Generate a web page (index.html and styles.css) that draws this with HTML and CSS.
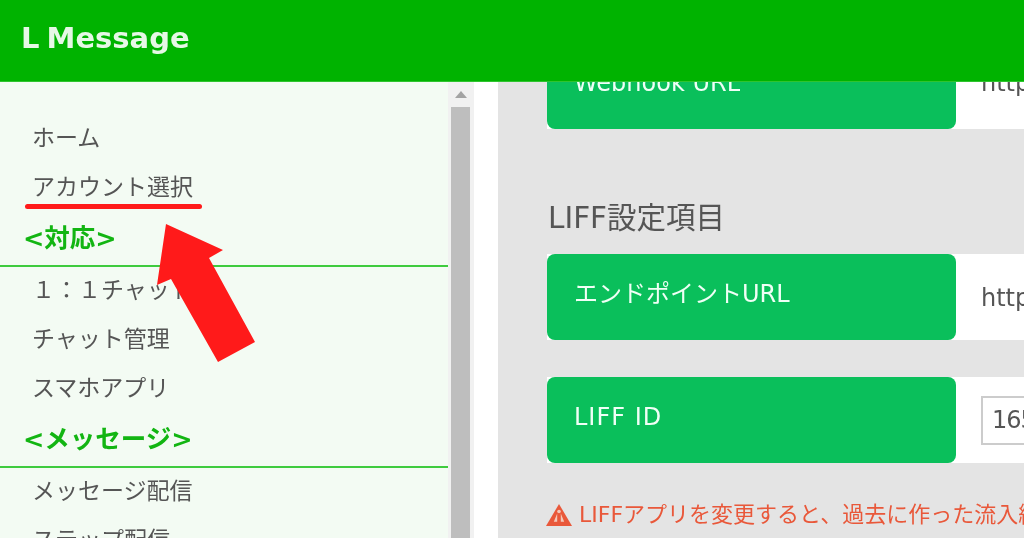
FILE: index.html
```html
<!DOCTYPE html>
<html lang="ja">
<head>
<meta charset="utf-8">
<title>L Message</title>
<link rel="stylesheet" href="styles.css">
</head>
<body>
<header class="topbar"><span class="logo">L Message</span></header>
<div class="body-row">
  <nav class="sidebar">
    <div class="nav-scroll">
      <a class="nav-item">ホーム</a>
      <a class="nav-item">アカウント選択</a>
      <div class="nav-heading">&lt;対応&gt;</div>
      <a class="nav-item">１：１チャット</a>
      <a class="nav-item">チャット管理</a>
      <a class="nav-item">スマホアプリ</a>
      <div class="nav-heading">&lt;メッセージ&gt;</div>
      <a class="nav-item">メッセージ配信</a>
      <a class="nav-item">ステップ配信</a>
    </div>
    <div class="scrollbar"><span class="scroll-up"></span><span class="scroll-thumb"></span></div>
  </nav>
  <div class="gutter"></div>
  <main class="content">
    <div class="scrolled">
      <div class="row row-webhook">
        <div class="label">Webhook URL</div>
        <div class="value">https://</div>
      </div>
      <h2 class="section-title">LIFF設定項目</h2>
      <div class="row row-endpoint">
        <div class="label">エンドポイントURL</div>
        <div class="value">https://</div>
      </div>
      <div class="row row-id">
        <div class="label">LIFF ID</div>
        <div class="value"><span class="id-input">1655</span></div>
      </div>
      <p class="warning"><svg class="warn-icon" viewBox="0 0 26 22"><path d="M13 0 26 22H0Z" fill="#e9583a"/><path d="M11.200 9.500 7.800 17.800H11.200ZM14.800 9.500 18.200 17.800H14.800Z" fill="#f3c9ba"/><circle cx="13" cy="7.500" r="1.800" fill="#f3c9ba"/></svg>LIFFアプリを変更すると、過去に作った流入経路のURLが無効になります</p>
    </div>
  </main>
</div>
<div class="mark-line"></div>
<svg class="mark-arrow" viewBox="0 0 1024 538"><polygon points="166,224 223,250 209,258 255,342 218,362 171,279 157,285" fill="#ff1a1a"/></svg>
</body>
</html>
```
FILE: styles.css
```css
* { box-sizing: border-box; }
html, body { margin: 0; height: 100%; overflow: hidden; }
body {
  width: 1024px;
  height: 538px;
  font-family: "DejaVu Sans", "Noto Sans CJK JP", sans-serif;
  color: #555;
  display: flex;
  flex-direction: column;
  position: relative;
  background: #e4e4e4;
}
.topbar {
  height: 82px;
  flex: none;
  background: #00b300;
  border-bottom: 1px solid #2fc42f;
  padding: 19px 0 0 21px;
  position: relative;
  z-index: 2;
}
.logo {
  display: block;
  font-family: "DejaVu Sans", sans-serif;
  font-weight: 700;
  font-size: 29px;
  line-height: 38px;
  word-spacing: -3px;
  color: #e6f8e6;
  filter: blur(0.6px);
}
.body-row { flex: 1; display: flex; min-height: 0; }
.sidebar {
  width: 474px;
  flex: none;
  display: flex;
  background: #f3fbf3;
  overflow: hidden;
}
.nav-scroll { width: 448px; flex: none; padding-top: 32px; filter: blur(0.35px); }
.nav-item {
  display: block;
  height: 49px;
  line-height: 45px;
  padding-left: 32px;
  font-family: "Noto Sans CJK JP", sans-serif;
  font-size: 23px;
  color: #555;
  white-space: nowrap;
}
.nav-heading {
  height: 54px;
  line-height: 50px;
  margin-top: 1px;
  padding-left: 23px;
  font-size: 25.500px;
  font-weight: 700;
  color: #12b512;
  border-bottom: 2px solid #3ecb3e;
  margin-bottom: -1px;
  white-space: nowrap;
}
.scrollbar {
  width: 26px;
  flex: none;
  background: #f1f1f1;
  display: flex;
  flex-direction: column;
  align-items: center;
  padding: 9px 4px 0 3px;
}
.scroll-up {
  width: 0;
  height: 0;
  border-left: 6px solid transparent;
  border-right: 6px solid transparent;
  border-bottom: 7px solid #a3a3a3;
  margin-bottom: 9px;
}
.scroll-thumb { width: 19px; flex: 1; background: #bebebe; }
.gutter { width: 24px; flex: none; background: #fff; }
.content { flex: 1; min-width: 0; overflow: hidden; background: #e4e4e4; }
.scrolled { margin-top: -47px; padding-left: 49px; filter: blur(0.35px); }
.row { display: flex; width: 600px; background: #fff; }
.label {
  width: 409px;
  flex: none;
  background: #0abf5b;
  color: #f0fff6;
  border-radius: 8px;
  font-size: 24px;
  padding-left: 27px;
}
.value { flex: 1; padding-left: 25px; font-size: 24px; color: #555; white-space: nowrap; }
.row-webhook { height: 94px; }
.row-webhook .label { line-height: 96px; }
.row-webhook .value { line-height: 96px; }
.section-title {
  margin: 0;
  height: 125px;
  padding: 67px 0 0 1px;
  font-size: 29.500px;
  line-height: 44px;
  font-weight: 400;
  color: #555;
}
.row-endpoint { height: 86px; }
.row-endpoint .label { line-height: 80px; }
.row-endpoint .value { line-height: 88px; }
.row-id { height: 86px; margin-top: 37px; }
.row-id .label { line-height: 80px; letter-spacing: 1px; }
.value .id-input { display: inline-block; }
.row-id .value { padding: 19px 0 0 25px; }
.id-input {
  width: 200px;
  height: 49px;
  border: 2px solid #ccc;
  line-height: 45px;
  padding-left: 9px;
  letter-spacing: -1px;
}
.warning {
  margin: 36px 0 0 -1px;
  display: flex;
  align-items: center;
  font-size: 22px;
  line-height: 32px;
  color: #e9583a;
  white-space: nowrap;
  gap: 7px;
}
.warn-icon { width: 26px; height: 22px; flex: none; }
.mark-line {
  position: absolute;
  left: 25px;
  top: 204px;
  width: 177px;
  height: 5px;
  border-radius: 3px;
  background: #ff1a1a;
  z-index: 3;
}
.mark-arrow {
  position: absolute;
  left: 0;
  top: 0;
  width: 1024px;
  height: 538px;
  z-index: 3;
  pointer-events: none;
}
```
